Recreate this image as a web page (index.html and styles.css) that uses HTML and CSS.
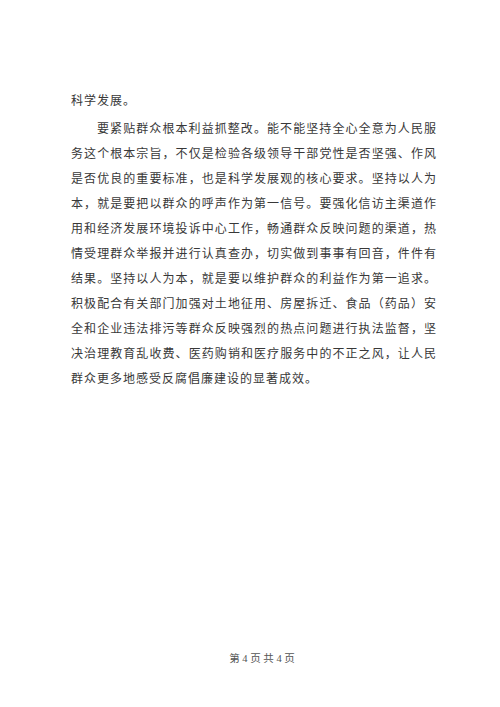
FILE: index.html
```html
<!DOCTYPE html>
<html lang="zh-CN">
<head>
    <meta charset="UTF-8">
    <meta name="viewport" content="width=device-width, initial-scale=1.0">
    <title>第4页</title>
    <link rel="stylesheet" href="styles.css">
</head>
<body>
    <div class="page">
        <div class="content">
            <p>科学发展。</p>
            <p class="indent">要紧贴群众根本利益抓整改。能不能坚持全心全意为人民服务这个根本宗旨，不仅是检验各级领导干部党性是否坚强、作风是否优良的重要标准，也是科学发展观的核心要求。坚持以人为本，就是要把以群众的呼声作为第一信号。要强化信访主渠道作用和经济发展环境投诉中心工作，畅通群众反映问题的渠道，热情受理群众举报并进行认真查办，切实做到事事有回音，件件有结果。坚持以人为本，就是要以维护群众的利益作为第一追求。积极配合有关部门加强对土地征用、房屋拆迁、食品（药品）安全和企业违法排污等群众反映强烈的热点问题进行执法监督，坚决治理教育乱收费、医药购销和医疗服务中的不正之风，让人民群众更多地感受反腐倡廉建设的显著成效。</p>
        </div>
        <div class="footer">第 4 页 共 4 页</div>
    </div>
</body>
</html>
```

FILE: styles.css
```css
body {
    margin: 0;
    background-color: #ffffff;
    font-family: "Noto Sans CJK SC", sans-serif;
    color: #383838;
}
.page {
    display: flex;
    flex-direction: column;
    height: 707px;
    box-sizing: border-box;
    padding: 87px 0 41px 71px;
}
.content {
    width: 366px;
    font-size: 12px;
    letter-spacing: 1px;
    line-height: 25px;
}
.content p {
    margin: 0;
    text-align: justify;
}
.content p + p {
    margin-top: 3px;
}
.indent {
    text-indent: 26px;
}
.footer {
    margin-top: auto;
    width: 366px;
    padding-left: 8px;
    text-align: center;
    font-family: "Liberation Serif", "Noto Sans CJK SC", serif;
    font-size: 10.5px;
    line-height: 14px;
    color: #555555;
}
```
